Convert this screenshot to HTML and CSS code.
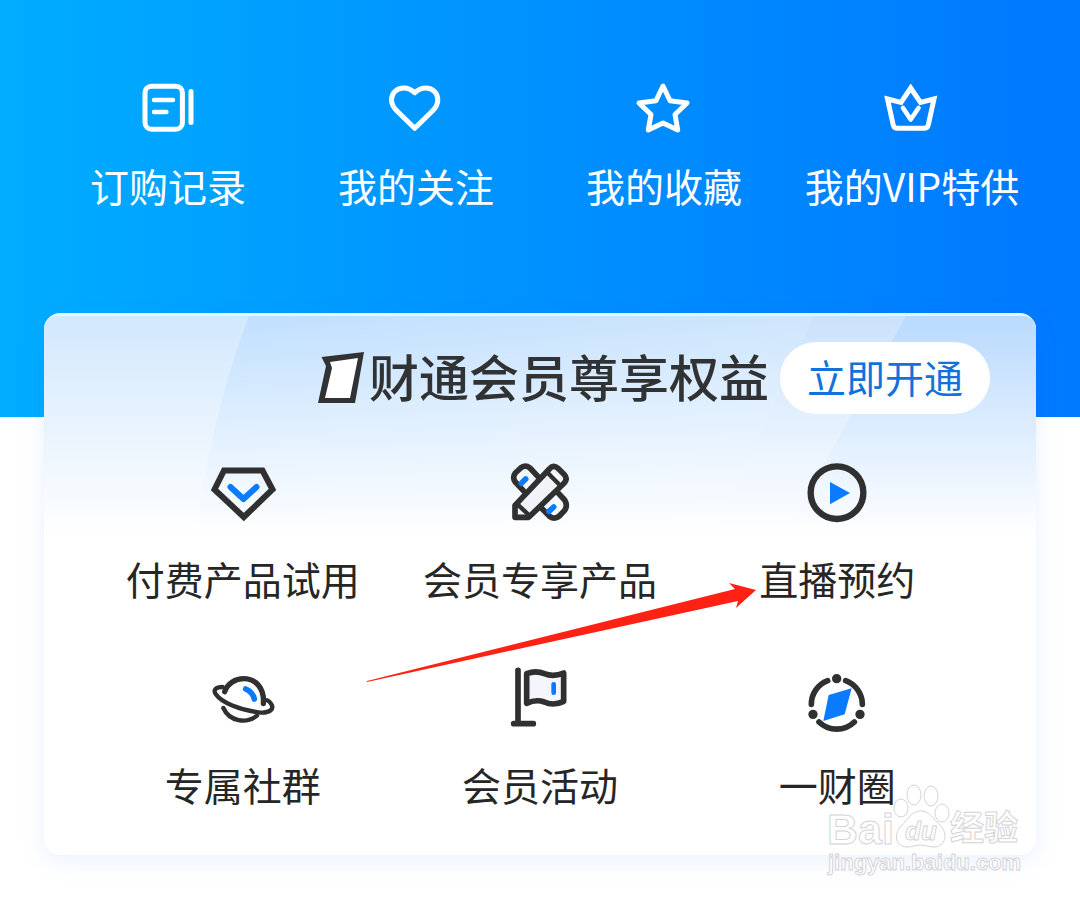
FILE: index.html
```html
<!DOCTYPE html>
<html lang="zh-CN">
<head>
<meta charset="utf-8">
<meta name="viewport" content="width=device-width, initial-scale=1">
<title>财通会员尊享权益</title>
<link rel="stylesheet" href="styles.css">
</head>
<body>
<header class="hero">
  <nav class="shortcuts">
    <a class="entry" href="#orders">
      <svg class="icon line" viewBox="0 0 72 72" aria-hidden="true"><rect x="13" y="14.2" width="37.4" height="43" rx="6.5"/><path d="M22 28H41M22 40H34.5" stroke-width="4.4"/><path d="M59 19.5V50.5"/></svg>
      <span class="label">订购记录</span>
    </a>
    <a class="entry" href="#following">
      <svg class="icon line" viewBox="0 0 72 72" aria-hidden="true"><path d="M34.7 20.8C31.5 17.4 27.5 15.900 23.500 15.900C17 15.900 11.500 21 11.500 28C11.500 32.500 13.500 35.500 17 39L34.700 56.300L52.400 39C55.900 35.500 57.800 32.500 57.800 28C57.800 21 52.400 15.900 46 15.900C42 15.900 37.900 17.400 34.700 20.800Z"/></svg>
      <span class="label">我的关注</span>
    </a>
    <a class="entry" href="#favorites">
      <svg class="icon line" viewBox="0 0 72 72" aria-hidden="true"><path d="M35 14L42 28.700L59 31L47 42.500L49.700 58L35 51L20.300 58L23 42.500L11 31L28 28.700Z"/></svg>
      <span class="label">我的收藏</span>
    </a>
    <a class="entry" href="#vip">
      <svg class="icon line" viewBox="0 0 72 72" aria-hidden="true"><path stroke-linejoin="miter" d="M11.500 27L25 30.500L34.700 16L44.500 30.500L58 27L52.300 53Q51.500 56.300 48 56.300H21.500Q18 56.300 17.200 53Z"/><path d="M27 36L34.700 47.500L42.500 36" stroke-width="4.600"/></svg>
      <span class="label">我的VIP特供</span>
    </a>
  </nav>
</header>
<main class="card">
  <svg class="sheen" viewBox="0 0 992 220" preserveAspectRatio="none" aria-hidden="true">
    <defs>
      <linearGradient id="band" x1="0" y1="0" x2="1" y2="0"><stop offset="0" stop-color="#bfdfff"/><stop offset="1" stop-color="#d4e8fc"/></linearGradient>
      <linearGradient id="fade" x1="0" y1="0" x2="0" y2="1"><stop offset="0" stop-color="#fff" stop-opacity="0"/><stop offset="1" stop-color="#fff"/></linearGradient>
    </defs>
    <rect width="992" height="220" fill="#d2e8fd"/>
    <path d="M205 0H992V220H150Q170 90 205 0Z" fill="url(#band)"/>
    <path d="M770 0H992V220H670Z" fill="#cbe2fc"/>
    <path d="M862 0H992V220H740Z" fill="#b9dafe"/>
    <rect width="992" height="220" fill="url(#fade)"/>
  </svg>
  <div class="heading">
    <h1 class="title">
      <svg class="mark" viewBox="0 0 46 52" aria-hidden="true"><path d="M3.500 5L46 0L37 51H0L8 14Z" fill="#303234"/><path d="M12 10L40 6L32 46H7L14 16Z" fill="#fff"/></svg>
      <span class="name">财通会员尊享权益</span>
    </h1>
    <button class="open" type="button">立即开通</button>
  </div>
  <div class="benefits">
    <a class="entry" href="#trial">
      <svg class="icon dark" viewBox="0 0 72 72" stroke-width="6" aria-hidden="true"><path stroke-linejoin="miter" d="M17 13.500H55.500L65.500 32.500L36.800 60L7.500 32.500Z"/><path class="blue" d="M23.500 30L36.500 42L49.500 30"/></svg>
      <span class="label">付费产品试用</span>
    </a>
    <a class="entry" href="#exclusive">
      <svg class="icon dark" viewBox="42 51 216 216" stroke-width="17" aria-hidden="true"><path d="M100 152L76 126Q66 112 76 99L92 84Q105 73 120 84L144 110M200 154L224 180Q234 196 224 211L208 228Q194 240 180 230L154 204"/><path d="M75 232V196L178 87Q190 72 204 85L222 103Q235 116 222 130L116 232Z" fill="#f1f3f8"/><path d="M170 95L212 138M80 191L120 228" stroke-width="13"/><path d="M190 99L205 113" stroke="#fff" stroke-width="9"/><path class="blue" d="M94 130L107 117M177 214L191 201" stroke-width="17"/></svg>
      <span class="label">会员专享产品</span>
    </a>
    <a class="entry" href="#live">
      <svg class="icon dark" viewBox="34 51 216 216" stroke-width="19" aria-hidden="true"><circle cx="142" cy="158" r="79"/><path class="solid" d="M121 126L181 159L121 193Z"/></svg>
      <span class="label">直播预约</span>
    </a>
    <a class="entry" href="#community">
      <svg class="icon dark" viewBox="50 39 216 216" stroke-width="13" aria-hidden="true"><path stroke-width="16" d="M103 125C112 99 136 86 160 86C197 86 223 116 219 161"/><path d="M97 111C76 111 68 120 76 132C94 158 148 180 204 187C242 191 252 175 242 161C239 156 235 153 231 151"/><path stroke-width="13" d="M99 174C117 214 168 223 200 197"/><path class="blue" stroke-width="17" d="M166 117Q187 126 192 147"/></svg>
      <span class="label">专属社群</span>
    </a>
    <a class="entry" href="#events">
      <svg class="icon dark" viewBox="42 39 216 216" stroke-width="17" aria-hidden="true"><path d="M84 61V220M71 221H130"/><path fill="#f5f6fd" d="M110 71Q138 60 163 71Q190 82 221 69V154Q190 169 163 156Q138 147 110 160Z"/><path class="blue" stroke-width="14" d="M191 103V128"/></svg>
      <span class="label">会员活动</span>
    </a>
    <a class="entry" href="#circle">
      <svg class="icon dark" viewBox="34 39 216 216" stroke-width="17" aria-hidden="true"><path d="M114 92A76 76 0 0 0 65 163M168 92A76 76 0 0 1 218 163M88 216A76 76 0 0 0 194 216"/><path fill="#303030" stroke="none" d="M127 86a14 14 0 1 0 28 0a14 14 0 1 0-28 0M56 193a14 14 0 1 0 28 0a14 14 0 1 0-28 0M197 193a14 14 0 1 0 28 0a14 14 0 1 0-28 0"/><path class="solid" d="M117 135L186 115L165 193L101 213Z"/></svg>
      <span class="label">一财圈</span>
    </a>
  </div>
  <svg class="arrow" viewBox="0 0 390 102" aria-hidden="true"><path fill="#ff2114" d="M0 99L368 7L362 1L389 8L369 26L371 19L0 100Z"/></svg>
  <svg class="watermark" viewBox="0 0 200 96" role="img" aria-label="Baidu 经验 jingyan.baidu.com">
    <g class="wm">
      <text x="1" y="61" class="wm-name">Bai</text>
      <ellipse cx="75" cy="25" rx="7" ry="9"/><ellipse cx="88" cy="12" rx="7" ry="10"/><ellipse cx="105" cy="13" rx="7" ry="10"/><ellipse cx="116" cy="30" rx="7" ry="9"/>
      <path d="M95 28C104 28 107 36 114 42C123 51 119 64 108 64C102 64 99 62 95 62C90 62 86 64 81 64C70 64 67 52 75 43C82 37 85 28 95 28Z"/>
      <text x="79" y="57" class="wm-du">du</text>
      <text x="124" y="57" class="wm-cn">经验</text>
      <text x="2" y="87" class="wm-url">jingyan.baidu.com</text>
    </g>
  </svg>
</main>
</body>
</html>
```
FILE: styles.css
```css
* {
  box-sizing: border-box;
}

body {
  margin: 0;
  padding-bottom: 44px;
  background: #fff;
  color: #262626;
  font-family: "Noto Sans CJK SC", "Noto Sans", sans-serif;
}

.hero {
  padding: 72px 44px 208px;
  background: linear-gradient(90deg, #00adff, #0096ff 40%, #007aff 96%);
  color: #fff;
}

.shortcuts {
  display: grid;
  grid-template-columns: repeat(4, 1fr);
}

.entry {
  display: flex;
  flex-direction: column;
  align-items: center;
  color: inherit;
  text-decoration: none;
}

.shortcuts .entry {
  gap: 17px;
}

.benefits .entry {
  gap: 25px;
}

.icon {
  width: 72px;
  height: 72px;
  fill: none;
  stroke-linecap: round;
  stroke-linejoin: round;
}

.line {
  stroke: #fff;
  stroke-width: 5;
}

.dark {
  stroke: #303030;
}

.blue {
  stroke: #0a7bff;
}

.solid {
  fill: #0a7bff;
  stroke: none;
}

.label {
  font-size: 39px;
  line-height: 48px;
  white-space: nowrap;
}

.card {
  position: relative;
  margin: -104px 44px 0;
  padding: 26px 46px 47px;
  border-top: 3px solid #e4f7ff;
  border-radius: 16px;
  background: #fff;
  box-shadow: 0 6px 24px rgba(40, 120, 255, 0.1);
}

.sheen {
  position: absolute;
  inset: 0 0 auto;
  width: 100%;
  height: 220px;
  border-radius: 14px 14px 0 0;
}

.heading,
.benefits {
  position: relative;
}

.heading {
  display: flex;
  justify-content: flex-end;
  align-items: center;
  gap: 11px;
}

.title {
  display: flex;
  align-items: center;
  gap: 5px;
  margin: 0;
  color: #303234;
  font-size: 50px;
  font-weight: 500;
  line-height: 64px;
  white-space: nowrap;
}

.name {
  padding-bottom: 6px;
}

.mark {
  width: 46px;
  height: 52px;
}

.open {
  width: 210px;
  height: 72px;
  padding: 0 0 4px;
  border: 0;
  border-radius: 36px;
  background: #fff;
  color: #1272dc;
  font: inherit;
  font-size: 39px;
  line-height: 68px;
}

.benefits {
  display: grid;
  grid-template-columns: repeat(3, 1fr);
  row-gap: 61px;
  margin: 43px 4px 0;
}

.arrow {
  position: absolute;
  top: 266px;
  left: 323px;
  width: 390px;
  height: 102px;
  pointer-events: none;
}

.watermark {
  position: absolute;
  right: 10px;
  bottom: -24px;
  width: 200px;
  height: 96px;
  overflow: visible;
  pointer-events: none;
}

.wm {
  fill: #fff;
  stroke: #d4d4d8;
  stroke-width: 1;
  font-family: "Liberation Sans", "Noto Sans CJK SC", sans-serif;
  font-weight: 700;
}

.wm-name {
  font-size: 43px;
}

.wm-du {
  font-size: 26px;
  font-style: italic;
}

.wm-cn {
  font-size: 34px;
}

.wm-url {
  font-size: 22px;
}
```
